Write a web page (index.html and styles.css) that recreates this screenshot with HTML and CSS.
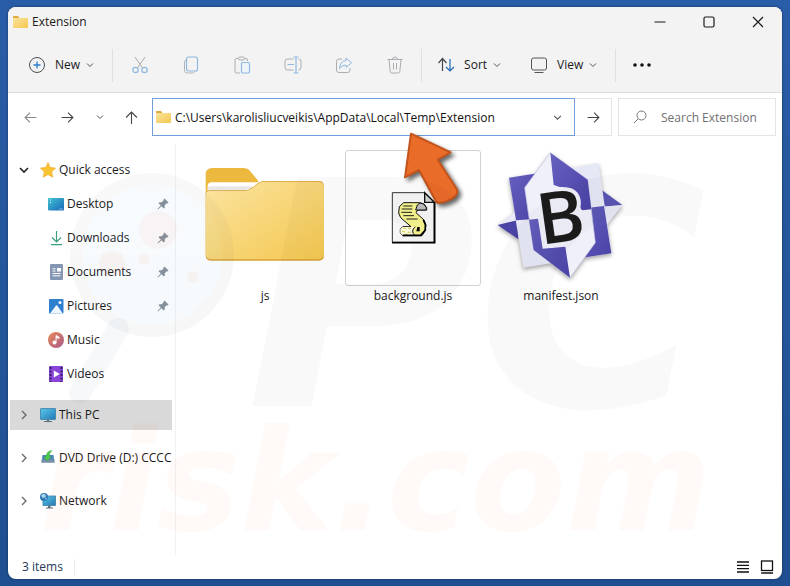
FILE: index.html
```html
<!DOCTYPE html>
<html lang="en">
<head>
    <meta charset="utf-8">
    <title>Extension</title>
    <link rel="stylesheet" href="styles.css">
</head>
<body>
    <svg class="defs" aria-hidden="true">
        <defs>
            <linearGradient id="folderFill" x1="0" y1="0" x2="1" y2="1">
                <stop offset="0" stop-color="#fbe4a0"/>
                <stop offset="1" stop-color="#f4c74f"/>
            </linearGradient>
            <linearGradient id="screenFill" x1="0" y1="0" x2="1" y2="1">
                <stop offset="0" stop-color="#5cc8e8"/>
                <stop offset="1" stop-color="#1f78b8"/>
            </linearGradient>
            <linearGradient id="desktopFill" x1="0" y1="0" x2="1" y2="1">
                <stop offset="0" stop-color="#45c3d4"/>
                <stop offset="1" stop-color="#1768b8"/>
            </linearGradient>
            <linearGradient id="musicFill" x1="0" y1="0" x2="1" y2="1">
                <stop offset="0" stop-color="#e98a55"/>
                <stop offset="1" stop-color="#a85a8c"/>
            </linearGradient>
            <linearGradient id="purpleFill" x1="0" y1="0" x2="1" y2="1">
                <stop offset="0" stop-color="#6660bf"/>
                <stop offset="1" stop-color="#4a42a6"/>
            </linearGradient>
        </defs>
        <symbol id="folder" viewBox="0 0 16 14">
            <path d="M0 1.500Q0 1 .5 1H5l1.500 2H0z" fill="#e3ab3a"/>
            <path d="M0 3h14.500q.5 0 .5.5v9q0 .5-.5.5H.5q-.5 0-.5-.5z" fill="url(#folderFill)"/>
        </symbol>
        <symbol id="down" viewBox="0 0 8 8">
            <path d="M1 2.500l3 3 3-3" fill="none" stroke="currentColor"/>
        </symbol>
        <symbol id="right" viewBox="0 0 10 10">
            <path d="M3 1l4 4-4 4" fill="none" stroke="currentColor" stroke-width="1.300"/>
        </symbol>
        <symbol id="pin" viewBox="0 0 12 12">
            <path d="M7.500.5l4 4-1 1-.8-.2-2 2 .1 2.200-1 1-2.300-2.300L1 11.500l-.5-.5 3.300-3.500L1.500 5.200l1-1 2.200.1 2-2-.2-.8z" fill="#87919a"/>
        </symbol>
    </svg>

    <main class="window">
        <header class="titlebar">
            <svg class="icon"><use href="#folder"/></svg>
            <h1 class="title">Extension</h1>
            <div class="window-controls">
                <button aria-label="Minimize"><svg viewBox="0 0 12 12"><path d="M.5 6h11"/></svg></button>
                <button aria-label="Maximize"><svg viewBox="0 0 12 12"><rect x="1" y="1" width="10" height="10" rx="1.500"/></svg></button>
                <button aria-label="Close"><svg viewBox="0 0 12 12"><path d="M1 1l10 10M11 1L1 11"/></svg></button>
            </div>
        </header>

        <div class="toolbar">
            <button class="tool">
                <svg class="tool-icon" viewBox="0 0 18 18"><circle cx="9" cy="9" r="7.500" stroke="#4a4f55"/><path d="M9 5.500v7M5.500 9h7" stroke="#2b7ccc" stroke-width="1.300"/></svg>
                New
                <svg class="caret"><use href="#down"/></svg>
            </button>
            <div class="tool-group">
                <button class="tool-small" aria-label="Cut"><svg viewBox="0 0 18 18"><path d="M4 1l7.500 11M14 1L6.500 12" stroke="#a9adb1"/><g stroke="#8fb9e0" stroke-width="1.200"><circle cx="4.500" cy="14" r="2.700"/><circle cx="13.500" cy="14" r="2.700"/></g></svg></button>
                <button class="tool-small" aria-label="Copy"><svg viewBox="0 0 18 18"><path d="M4 4q-1.500.5-1.500 2v8.500q0 2.500 2.500 2.500h5.500q1.500 0 2-1.500" stroke="#b3b7bb"/><rect x="4.500" y="1" width="11" height="14" rx="2" stroke="#8fb9e0" stroke-width="1.200"/></svg></button>
                <button class="tool-small" aria-label="Paste"><svg viewBox="0 0 18 18"><path d="M5.500 2.500h-2q-1.500 0-1.500 1.500v11.500q0 1.500 1.500 1.500H7M11.500 2.500h1.500q1.500 0 1.500 1.500v1" stroke="#a9adb1"/><rect x="5.500" y="1" width="6" height="3" rx="1.500" stroke="#a9adb1"/><rect x="8.500" y="6.500" width="8" height="10.500" rx="1.200" fill="#eef4fb" stroke="#8fb9e0" stroke-width="1.200"/></svg></button>
                <button class="tool-small" aria-label="Rename"><svg viewBox="0 0 18 18"><path d="M9.500 3h-6Q1 3 1 5.500v6Q1 14 3.500 14h6M14.500 3q2.500 0 2.500 2.500v6q0 2.500-2.500 2.500" stroke="#a9adb1"/><path d="M12 1v16M9.500 1h5M9.500 17h5M3.500 8.500h6.500" stroke="#8fb9e0" stroke-width="1.200"/></svg></button>
                <button class="tool-small" aria-label="Share"><svg viewBox="0 0 18 18"><path d="M7 3H4Q1.500 3 1.500 5.500V14q0 2.500 2.500 2.500h8.500q2.500 0 2.500-2.500v-2" stroke="#a9adb1"/><path d="M11 2l5.500 4.800L11 11.500V9q-4.500 0-6.500 3.500Q5 5 11 4.500z" stroke="#8fb9e0" stroke-linejoin="round"/></svg></button>
                <button class="tool-small" aria-label="Delete"><svg viewBox="0 0 18 18"><path d="M1.500 3.500h15M6.500 3.500Q6.500 1 9 1t2.500 2.500M3 3.500l1.200 12q.2 1.500 1.500 1.500h6.600q1.300 0 1.500-1.500L15 3.500M7.500 7v6.500M10.500 7v6.500" stroke="#a9adb1"/></svg></button>
            </div>
            <button class="tool">
                <svg class="tool-icon" viewBox="0 0 18 18"><path d="M5.500 15V3M1.500 7l4-4.500 4 4.500" stroke="#44484d" stroke-width="1.200"/><path d="M13 3v12M9 11l4 4 4-4" stroke="#2468b8" stroke-width="1.200"/></svg>
                Sort
                <svg class="caret"><use href="#down"/></svg>
            </button>
            <button class="tool view">
                <svg class="tool-icon" viewBox="0 0 18 18"><rect x="1.500" y="2" width="15" height="12" rx="2" stroke="#555"/><path d="M4.500 16.500h9" stroke="#555"/></svg>
                View
                <svg class="caret"><use href="#down"/></svg>
            </button>
            <button class="more" aria-label="See more"><svg viewBox="0 0 18 4"><circle cx="2" cy="2" r="1.800"/><circle cx="9" cy="2" r="1.800"/><circle cx="16" cy="2" r="1.800"/></svg></button>
        </div>

        <nav class="navbar">
            <button class="nav-btn back" aria-label="Back"><svg viewBox="0 0 12 12"><path d="M11.500 6H1M5.500 1.500L1 6l4.500 4.500"/></svg></button>
            <button class="nav-btn" aria-label="Forward"><svg viewBox="0 0 12 12"><path d="M.5 6H11M6.500 1.500L11 6l-4.500 4.500"/></svg></button>
            <button class="nav-btn recent" aria-label="Recent locations"><svg class="caret"><use href="#down"/></svg></button>
            <button class="nav-btn" aria-label="Up"><svg viewBox="0 0 12 12"><path d="M6 12V1M1 6l5-5 5 5"/></svg></button>
            <div class="address">
                <svg class="icon"><use href="#folder"/></svg>
                <input type="text" aria-label="Address" value="C:\Users\karolisliucveikis\AppData\Local\Temp\Extension">
                <button aria-label="Previous locations"><svg class="caret"><use href="#down"/></svg></button>
            </div>
            <button class="go" aria-label="Go"><svg viewBox="0 0 12 12"><path d="M.5 6H11M6.500 1.500L11 6l-4.500 4.500"/></svg></button>
            <div class="search">
                <svg viewBox="0 0 14 14"><circle cx="8.500" cy="5.500" r="4.500"/><path d="M5.300 8.700L1 13"/></svg>
                <input type="text" aria-label="Search Extension" placeholder="Search Extension">
            </div>
        </nav>

        <div class="content">
            <aside class="sidebar">
                <a href="#" class="root quick">
                    <svg class="expand open" viewBox="0 0 10 10"><path d="M1 3l4 4 4-4" fill="none" stroke="currentColor" stroke-width="1.600"/></svg>
                    <svg class="icon" viewBox="0 0 16 16"><path d="M8 .5l2.300 5 5.400.6-4 3.700 1.100 5.500L8 12.600l-4.800 2.700 1.100-5.500-4-3.700 5.400-.6z" fill="#f8c22e" stroke="#e9a92a" stroke-width=".6"/></svg>
                    Quick access
                </a>
                <ul class="pinned">
                    <li><a href="#">
                        <svg class="icon" viewBox="0 0 16 16"><rect y="2" width="16" height="12.500" rx="1" fill="url(#desktopFill)"/><path d="M2 4h1M2 6.500h1M11.500 13h1M13.500 13h1" stroke="#e8f8ff"/></svg>
                        <span>Desktop</span><svg class="pin"><use href="#pin"/></svg></a></li>
                    <li><a href="#">
                        <svg class="icon" viewBox="0 0 16 16"><path d="M8.500 1v10.500M4 7.500l4.500 4.500L13 7.500M3 14.700h11" fill="none" stroke="#3d9e82" stroke-width="1.200"/></svg>
                        <span>Downloads</span><svg class="pin"><use href="#pin"/></svg></a></li>
                    <li><a href="#">
                        <svg class="icon" viewBox="0 0 16 16"><rect x="2" width="13" height="16" rx="1" fill="#8496b3"/><path d="M4.500 4.800h3M4.500 7h3M4.500 9.500h8M4.500 11.800h8" stroke="#fff"/><rect x="9" y="4" width="4" height="3.500" fill="#fff"/></svg>
                        <span>Documents</span><svg class="pin"><use href="#pin"/></svg></a></li>
                    <li><a href="#">
                        <svg class="icon" viewBox="0 0 16 16"><rect x="1" y="1" width="14.500" height="14.500" rx="1" fill="#2f7fd0"/><path d="M2 15.500l6-8q.6-.6 1.200 0l5.500 8z" fill="#eef6ff"/><circle cx="12" cy="4.500" r="1.500" fill="#fff"/></svg>
                        <span>Pictures</span><svg class="pin"><use href="#pin"/></svg></a></li>
                    <li><a href="#">
                        <svg class="icon" viewBox="0 0 16 16"><circle cx="8" cy="8" r="8" fill="url(#musicFill)"/><circle cx="6.500" cy="10.500" r="2" fill="#fff"/><path d="M8 10.500V3.500l3 1.500v1.500L8.500 5.500" fill="#fff" stroke="#fff" stroke-width=".8"/></svg>
                        <span>Music</span></a></li>
                    <li><a href="#">
                        <svg class="icon" viewBox="0 0 16 16"><rect x="1" width="14" height="16" rx="1" fill="#8a45d8"/><path d="M2.500 1v15M13.500 1v15" stroke="#35206e" stroke-width="2" stroke-dasharray="2 1.500"/><path d="M5.800 4.500v7l6-3.500z" fill="#fff"/></svg>
                        <span>Videos</span></a></li>
                </ul>
                <a href="#" class="root selected">
                    <svg class="expand"><use href="#right"/></svg>
                    <svg class="icon" viewBox="0 0 16 16"><rect x=".5" y="1.500" width="15" height="11" rx=".5" fill="url(#screenFill)" stroke="#3a7fa8" stroke-width=".8"/><path d="M7 12.500h2V14h3v1H4v-1h3z" fill="#58707f"/></svg>
                    This PC
                </a>
                <a href="#" class="root">
                    <svg class="expand"><use href="#right"/></svg>
                    <svg class="icon" viewBox="0 0 16 16"><path d="M2.500 5h11l1 7.500h-13z" fill="#4b86bf"/><path d="M1.500 9.500h13v3h-13z" fill="#7d8fa3"/><path d="M4 6.500L7 11l4.500-4.500H9.500Q9 3 12 .5 6.500 1 6 6.500z" fill="#4cc84a" stroke="#2f9a38" stroke-width=".4"/></svg>
                    DVD Drive (D:) CCCC
                </a>
                <a href="#" class="root">
                    <svg class="expand"><use href="#right"/></svg>
                    <svg class="icon" viewBox="0 0 16 16"><rect x="3" y="3" width="12.500" height="9.500" fill="url(#screenFill)" stroke="#3a7fa8" stroke-width=".8"/><path d="M8 12.500h2.500V14.500h2.500v1H6v-1h2z" fill="#58707f"/><circle cx="4" cy="4" r="4" fill="#2e78b4"/><path d="M1 2.500Q4-.5 5.500 2T2.500 5zM5 5.500l2-1-1 2.500z" fill="#a7d6ea"/></svg>
                    Network
                </a>
            </aside>

            <section class="files">
                <figure class="file">
                    <!-- folder -->
                    <svg class="thumb" viewBox="24 33 402 402">
                        <path d="M47 104q0-20 20-20h92q14 0 22 10l24 29-20 40H47z" fill="#ecb83d"/>
                        <path d="M53 165v-26q0-12 12-12h140v20l-40 18z" fill="#fff"/>
                        <path d="M53 165v-18q0-8 10-8h128l-14 20z" fill="#e9e7e6"/>
                        <path d="M47 160q2-9 12-9h105q14 0 24-9l16-13q8-6 18-6h164q16 0 16 16v207q0 16-16 16H63q-16 0-16-16z" fill="#d9a035"/>
                        <path d="M47 164q2-11 12-11h105q14 0 24-9l16-13q8-6 18-6h162q18 0 18 16v199q0 18-18 18H65q-18 0-18-18z" fill="url(#folderFill)"/>
                    </svg>
                    <figcaption>js</figcaption>
                </figure>
                <figure class="file active">
                    <!-- script page with scroll -->
                    <svg class="thumb" viewBox="18 93 402 402">
                        <path d="M157 218h98l27 27v122H157z" fill="#f7f7f7" stroke="#333" stroke-width="3"/>
                        <path d="M284 246v122H156" fill="none" stroke="#000" stroke-width="5"/>
                        <path d="M254 218v29h29z" fill="#d5d5d5" stroke="#111" stroke-width="4"/>
                        <path d="M191 248h48l13 4 8 11v7h-27l-5 8 24 22 6 15-4 20-8 12h-58l-7-8v-12l7-7h25l-31-27-6-14 2-19z" fill="#f7f58d" stroke="#111" stroke-width="3"/>
                        <path d="M240 249l-8 6-5 15h32v-7l-8-11z" fill="#bdbdbd" stroke="#111" stroke-width="3"/>
                        <path d="M190 258h27M185 267h32M184 277h32M190 287h32M199 297h34" stroke="#222" stroke-width="3"/>
                        <path d="M188 321h38l-6 8v17h-33l-6-7v-12z" fill="#fffde0"/>
                        <path d="M189 325h9M186 335h9M204 325h9M203 337h9M195 343h9" stroke="#ded76b" stroke-width="4"/>
                        <path d="M188 346h54l14-16v-16l-6-14" fill="none" stroke="#000" stroke-width="5"/>
                        <path d="M226 321q-8 4-8 12t6 12" fill="none" stroke="#111" stroke-width="3"/>
                        <path d="M232 321h7v13h-10z"/>
                    </svg>
                    <figcaption>background.js</figcaption>
                    <svg class="pointer" viewBox="186 30 186 240" aria-hidden="true">
                        <path d="M213 41l119 56-39 22 57 88q8 18-20 32t-41 7L237 150l-42 22z" fill="#ea6c29" stroke="#c4541b" stroke-width="6" stroke-linejoin="round"/>
                    </svg>
                </figure>
                <figure class="file">
                    <svg class="thumb compass" viewBox="12 33 402 402">
                        <path d="M23 255L85 208v32z" fill="#e8e8f7"/>
                        <path d="M23 255l62-15v58z" fill="#4b43a5"/>
                        <path d="M397 195l-62-45v50z" fill="#5c55b5"/>
                        <path d="M397 195l-62 5 13 58z" fill="#e8e8f5"/>
                        <path d="M57 113L326 70l38 270-264 43z" fill="#e7e8f5"/>
                        <path d="M57 113l90-14v137l-69 5z" fill="url(#purpleFill)"/>
                        <path d="M290 204l52-6 22 142-90 14z" fill="url(#purpleFill)"/>
                        <path d="M181 38l112 81 23 189-76 105-109-83-27-187z" fill="#f0f0fb" stroke="#c4c3df" stroke-width="2"/>
                        <path d="M181 38l112 81 11 89-28 3-40-61-45-15z" fill="url(#purpleFill)"/>
                        <path d="M117 239l27-3 14 90 68-6 14 93-109-83z" fill="url(#purpleFill)"/>
                        <text x="152" y="315" transform="rotate(-8 152 315)" class="compass-letter">B</text>
                    </svg>
                    <figcaption>manifest.json</figcaption>
                </figure>
            </section>
        </div>

        <footer class="statusbar">
            <span class="count">3 items</span>
            <button aria-label="Details view"><svg viewBox="0 0 14 14"><path d="M1 2h12M1 5.300h12M1 8.600h12M1 12h12"/></svg></button>
            <button aria-label="Large icons view"><svg viewBox="0 0 14 14"><rect x="1.500" y="1" width="11" height="9.500"/><path d="M1 13h12"/></svg></button>
        </footer>

        <svg class="watermark" viewBox="0 0 774 572" aria-hidden="true">
            <path d="M110 322L72 386" stroke="#1b4f8c" stroke-width="22" stroke-linecap="round"/>
            <circle cx="144" cy="248" r="76" fill="#2e7ed0" stroke="#234" stroke-width="12"/>
            <g class="spots"><circle cx="150" cy="223" r="19"/><circle cx="104" cy="256" r="13"/><circle cx="136" cy="252" r="6"/><circle cx="185" cy="270" r="6"/></g>
            <text class="mark-top" x="238" y="399">PC</text>
            <text class="mark-bottom" x="32" y="523">risk.com</text>
        </svg>
    </main>
</body>
</html>
```
FILE: styles.css
```css
* {
    box-sizing: border-box;
}
body {
    margin: 0;
    min-height: 100vh;
    padding: 7px 8px;
    display: flex;
    background: linear-gradient(#2a5da7, #1f4f90);
    font-family: "Open Sans", "Noto Sans", sans-serif;
    font-size: 12px;
    line-height: 16px;
    color: #1a1a1a;
}
button {
    display: flex;
    align-items: center;
    justify-content: center;
    padding: 0;
    border: none;
    background: none;
    font: inherit;
    color: inherit;
}
button svg,
.search svg {
    fill: none;
    stroke: currentColor;
}
input {
    flex: 1;
    min-width: 0;
    padding: 2px 0 0;
    border: none;
    outline: none;
    background: none;
    font: inherit;
    color: inherit;
}
a {
    color: inherit;
    text-decoration: none;
}
.defs {
    position: absolute;
    width: 0;
    height: 0;
}
.window {
    position: relative;
    flex: 1;
    min-width: 0;
    display: flex;
    flex-direction: column;
    overflow: hidden;
    background: #fff;
    border-radius: 8px;
    box-shadow: 0 0 3px rgba(0, 0, 0, 0.4);
}
.icon {
    flex: none;
    width: 16px;
    height: 16px;
}
.caret {
    width: 8px;
    height: 8px;
    color: #555;
}

/* title bar */
.titlebar {
    display: flex;
    align-items: center;
    gap: 3px;
    height: 29px;
    padding-left: 5px;
    background: #f3f3f3;
}
.title {
    flex: 1;
    margin: 0;
    font-size: 12px;
    font-weight: normal;
}
.window-controls {
    display: flex;
}
.window-controls button {
    width: 49px;
    height: 28px;
}
.window-controls svg {
    width: 12px;
    height: 12px;
    stroke-width: 1.2;
}

/* toolbar */
.toolbar {
    display: flex;
    align-items: center;
    height: 57px;
    padding: 2px 0 0 20px;
    background: #f3f3f3;
    border-bottom: 1px solid #dcdcdc;
}
.tool {
    gap: 9px;
    padding-right: 18px;
}
.tool .caret {
    margin-left: -3px;
}
.tool-icon {
    width: 18px;
    height: 18px;
}
.tool-group {
    display: flex;
    margin-right: 15px;
    padding: 0 1px;
    border-left: 1px solid #e0e0e0;
    border-right: 1px solid #e0e0e0;
}
.tool-small {
    width: 51px;
    height: 33px;
}
.tool-small svg {
    width: 18px;
    height: 18px;
}
.view {
    margin-left: 11px;
}
.more {
    height: 33px;
    padding-left: 17px;
    border-left: 1px solid #e0e0e0;
}
.more svg {
    width: 18px;
    height: 4px;
    fill: #111;
    stroke: none;
}

/* address row */
.navbar {
    display: flex;
    align-items: stretch;
    height: 50px;
    padding: 5px 6px 7px 4px;
}
.nav-btn {
    width: 37px;
    color: #444;
}
.nav-btn svg {
    width: 13px;
    height: 13px;
}
.nav-btn .caret {
    width: 8px;
    height: 8px;
}
.back {
    color: #888;
}
.recent {
    width: 27px;
}
.address {
    flex: 1;
    display: flex;
    align-items: center;
    gap: 3px;
    margin-left: 2px;
    padding: 0 12px 0 3px;
    border: 1px solid #6fa0dc;
    color: #111;
}
.address .caret {
    width: 9px;
    height: 9px;
}
.go {
    width: 37px;
    border: 1px solid #e4e4e4;
    border-left: none;
    color: #444;
}
.go svg {
    width: 13px;
    height: 13px;
}
.search {
    display: flex;
    align-items: center;
    gap: 14px;
    width: 158px;
    margin-left: 6px;
    padding: 0 14px;
    border: 1px solid #e4e4e4;
    color: #777;
}
.search svg {
    width: 14px;
    height: 14px;
}
.search input::placeholder {
    color: #707070;
    opacity: 1;
}

/* main area */
.content {
    flex: 1;
    display: flex;
}
.sidebar {
    width: 168px;
    padding: 10px 3px 0 2px;
    border-right: 1px solid #f2f2f2;
}
.root {
    display: flex;
    align-items: center;
    height: 30px;
    margin-bottom: 13px;
    padding-left: 9px;
    gap: 3px;
    overflow: hidden;
    white-space: nowrap;
}
.quick {
    height: 34px;
    margin-bottom: 0;
}
.selected {
    background: #d9d9d9;
}
.expand {
    flex: none;
    width: 10px;
    height: 10px;
    margin-right: 8px;
    color: #666;
}
.open {
    color: #222;
}
.pinned {
    list-style: none;
    margin: 0 0 9px;
    padding: 0;
}
.pinned a {
    display: flex;
    align-items: center;
    gap: 3px;
    height: 34px;
    padding: 0 3px 0 38px;
}
.pinned span {
    flex: 1;
}
.pin {
    width: 12px;
    height: 12px;
}
.files {
    flex: 1;
    display: flex;
    flex-wrap: wrap;
    align-content: flex-start;
    gap: 12px;
    padding: 7px 21px;
}
.file {
    position: relative;
    width: 136px;
    margin: 0;
    text-align: center;
}
.thumb {
    display: block;
    width: 136px;
    height: 136px;
    border: 1px solid transparent;
    border-radius: 3px;
}
.active .thumb {
    border-color: #d2d2d2;
}
.file figcaption {
    margin-top: 2px;
}
.pointer {
    position: absolute;
    left: 57px;
    top: -20px;
    width: 62px;
    height: 80px;
    filter: drop-shadow(3px 3px 2px rgba(0, 0, 0, 0.6));
}
.compass {
    filter: drop-shadow(0 2px 2px rgba(0, 0, 0, 0.35));
}
.compass-letter {
    font-family: "Open Sans", sans-serif;
    font-size: 214px;
    font-weight: 600;
    fill: #1c1c1c;
    stroke: #f0f0fb;
    stroke-width: 24px;
    stroke-linejoin: round;
    paint-order: stroke;
}

/* status bar */
.statusbar {
    display: flex;
    align-items: center;
    gap: 10px;
    height: 24px;
    padding: 0 8px 0 14px;
    color: #24395c;
}
.count {
    margin-right: auto;
    padding-right: 11px;
    border-right: 1px solid #ececec;
}
.statusbar svg {
    width: 14px;
    height: 14px;
    color: #111;
    stroke-width: 1.3;
}

/* logo laid over the window */
.watermark {
    position: absolute;
    left: 0;
    top: 0;
    width: 100%;
    height: 100%;
    pointer-events: none;
    font-family: "DejaVu Sans", sans-serif;
    font-weight: bold;
    font-style: italic;
}
.watermark path,
.watermark > circle {
    opacity: 0.03;
}
.spots {
    fill: #ff7a50;
    opacity: 0.06;
}
.mark-top {
    font-size: 314px;
    fill: rgba(0, 0, 0, 0.025);
}
.mark-bottom {
    font-size: 140px;
    fill: rgba(240, 90, 20, 0.03);
}
```
